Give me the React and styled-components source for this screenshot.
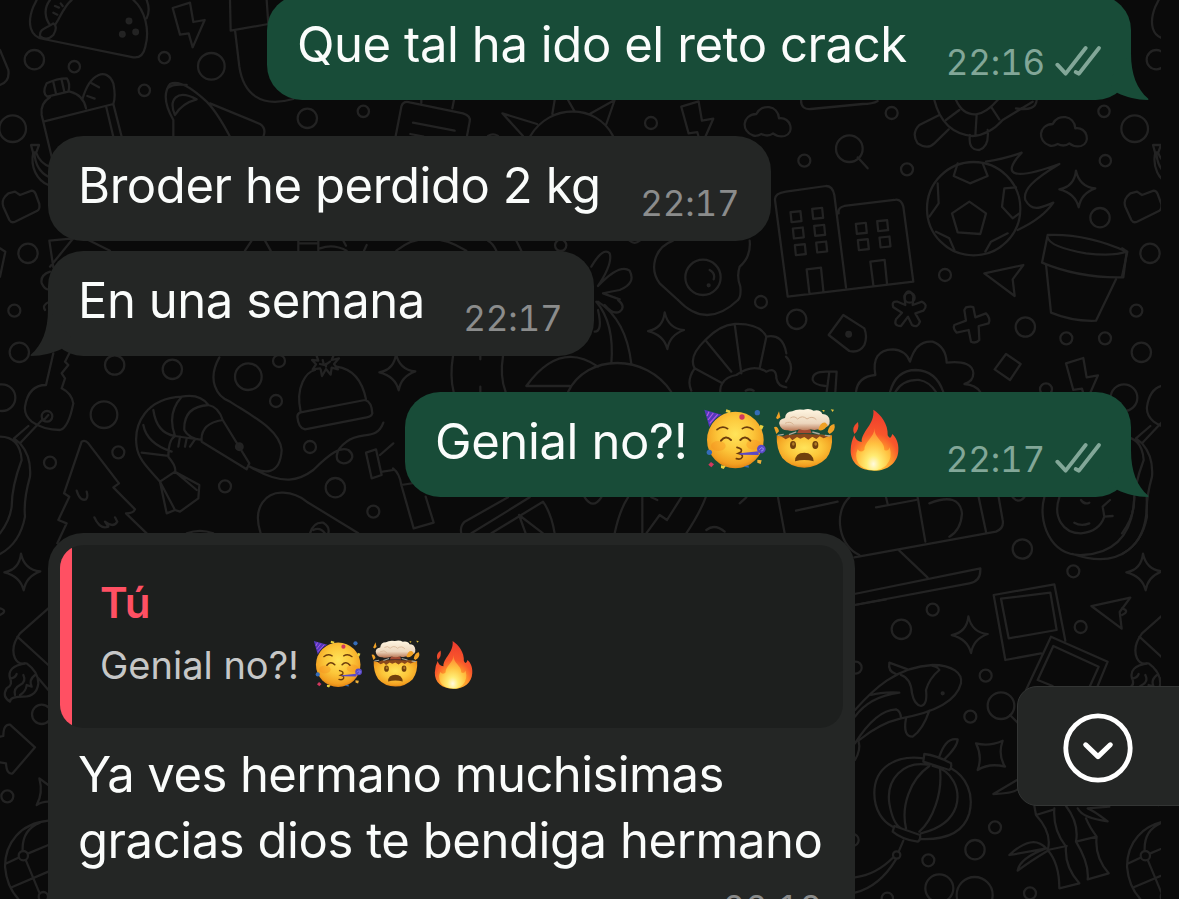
import React from "react";
import styled, { createGlobalStyle } from "styled-components";

const GlobalStyle = createGlobalStyle`
  * {
    box-sizing: border-box;
  }

  body {
    margin: 0;
    background: #0a0a0a;
    overflow: hidden;
  }
`;

const colors = {
  sent: "#184c38",
  received: "#242625",
  quote: "#1d1f1e",
  accent: "#ff5063",
  sentMeta: "#82a798",
  receivedMeta: "#8b8c8c",
};

/* ---------- wallpaper ---------- */

const Bolt = () => (
  <path d="M518 24L570 8L580 66L614 60L578 142L566 100L540 104Z" />
);

const Sparkle = () => (
  <path d="M870 512Q880 560 928 565Q885 580 878 622Q868 580 820 568Q865 560 870 512Z" />
);

const Cloud = () => (
  <path d="M790 436C755 425 755 375 800 372C815 340 865 345 868 385C905 380 915 430 885 438Q865 442 850 430Q835 442 815 432Q800 440 790 436Z" />
);

const Plane = () => <path d="M595 820L712 795L680 838L686 888Z" />;

const Bubbles = ({ items }) =>
  items.map(([x, y, r]) => <circle key={`${x}-${y}`} cx={x} cy={y} r={r} />);

// Doodles are drawn at three times their size, one block per area
const Block = ({ x, y, children }) => (
  <g transform={`translate(${x} ${y}) scale(0.33333)`}>{children}</g>
);

const windows = [
  [30, 650],
  [95, 640],
  [37, 699],
  [101, 691],
  [43, 749],
  [107, 741],
  [226, 685],
  [290, 677],
  [232, 734],
  [297, 726],
];

function Wallpaper() {
  return (
    <WallpaperSvg width="1161" height="899" viewBox="0 0 1161 899">
      <g
        fill="none"
        stroke="#232323"
        strokeWidth="6.8"
        strokeLinecap="round"
        strokeLinejoin="round"
      >
        <g id="tile-left">
          <Block x={0} y={0}>
            {/* taco */}
            <path d="M110 0L100 20C80 70 90 110 130 117L400 172Q428 176 436 140C450 90 435 30 400 0M120 108C118 85 140 85 160 70Q175 80 160 105Q140 125 120 108M165 75C180 55 190 20 215 0M150 75C135 55 130 25 150 0M440 0Q452 30 440 55M165 18l12 5M160 38l12 6M182 10l6 8" />
            <g fill="#232323">
              <Bubbles items={[[387, 63, 7], [367, 103, 7], [407, 96, 7]]} />
            </g>
            <Bolt />
            <path d="M0 255Q30 245 25 210L0 150" />
            <path d="M690 0L692 92L705 90L718 200C730 280 780 325 880 297M692 92L805 72L800 0" />
            {/* bottle */}
            <path d="M140 250Q170 235 200 235Q212 250 205 275L142 290Q125 280 140 250ZM160 246l8 35M185 240l8 35M150 292Q120 310 125 345L155 470M210 275Q250 285 258 325M130 365L340 312L365 410M318 318L340 410M248 295C270 220 320 200 340 250Q348 290 340 312M275 250l22 12M262 288l22 8" />
            <path d="M520 410V360Q480 290 510 252Q545 235 620 305Q650 335 690 410M525 345C505 300 530 265 590 298Q545 310 525 345M502 265Q520 250 560 255M630 310L780 372Q800 385 790 410" />
            {/* banana */}
            <path d="M93 435h24l-8 22h-10zM100 457C90 500 110 540 145 555M108 457Q120 490 150 500M103 457Q106 510 145 530" />
            <path d="M15 590L25 580L45 575L60 585L95 572Q103 572 107 582L118 612Q120 628 112 632L45 665Q34 670 28 660L10 620Q4 602 15 590Z" />
            <path d="M0 745L16 755L0 830M148 722L220 715L150 800M148 722l12 80M265 720L330 752M150 815Q120 825 125 850Q135 870 145 868" />
            <path d="M735 752L755 722M795 722L812 752M895 722V752M955 722V752M895 730H955M960 745Q1000 730 1040 752M1030 722l8 15M1100 735l-8 17" />
            <Bubbles
              items={[
                [103, 179, 29],
                [223, 200, 17],
                [493, 173, 17],
                [634, 199, 40],
                [433, 271, 17],
                [38, 386, 40],
                [922, 355, 29],
                [1090, 334, 17],
                [84, 760, 29],
              ]}
            />
          </Block>
          <Block x={0} y={300}>
            {/* key and its tag */}
            <path d="M160 160L138 255Q85 255 75 320Q72 345 95 365Q130 390 180 390Q205 385 220 310Q215 280 185 265L195 235L185 220L205 195L195 185L208 160M148 5Q125 15 135 30M85 378L42 415L60 430L128 358M130 362L145 345M0 410Q60 410 65 480Q35 560 35 620Q30 660 0 700M60 430Q95 470 90 530Q70 600 75 650Q60 730 0 762" />
            {/* tree */}
            <path d="M245 425Q255 418 265 430L357 550L340 562L405 628Q400 640 378 640L440 700M245 425L192 580L208 590L175 660L200 670L172 730M230 572Q240 605 258 598Q265 592 260 575M283 652Q300 690 325 680L315 665Q340 685 352 665L345 652" />
            {/* shrimp */}
            <path d="M545 290C440 295 400 370 410 440C415 480 450 510 480 545L500 640L525 630L540 635L595 595L598 555L525 515M480 545L525 515Q530 500 505 470Q505 420 525 408M425 458L505 468M430 375Q440 430 515 455M460 330Q470 400 525 408M545 290Q500 340 525 408L605 420M545 290Q600 280 625 315Q550 320 553 390Q565 415 605 420M625 315Q655 320 668 360Q600 370 605 425L740 508L748 490L668 360M540 410l-5 30M560 415l-5 25M585 418l-15 22M480 545L525 630M525 515L590 570" />
            <circle cx="718" cy="440" r="10" fill="#232323" />
            <path d="M658 172C620 240 650 290 690 305C760 350 840 390 845 450C840 530 790 520 750 500C850 560 900 540 940 510C990 460 1020 440 1045 450C1070 470 1050 490 1030 490C1000 485 1005 450 1040 425C1080 390 1130 425 1150 368" />
            {/* beanie */}
            <path d="M902 335C885 260 920 215 945 210M1010 200Q1080 210 1098 298M902 337L1095 300Q1115 305 1117 340Q1115 350 1100 352L915 388Q895 385 892 350Q892 340 902 337" />
            <path d="M960 205L938 208L948 193L936 180L955 182L950 168M1000 168L995 180L1017 175L1002 192L1014 208L995 203L992 224L978 207L966 228L962 208M960 192L972 195L968 180M980 192L990 185M978 200V192" />
            <path d="M1098 458L1128 448L1145 525L1115 535ZM1140 465L1180 430M1148 515L1180 510" />
            <path d="M782 700C755 620 800 575 850 578Q890 580 920 605L1075 700M930 700Q940 665 970 668Q990 680 985 700M940 690Q960 680 975 700M560 700Q600 685 640 700" />
            <Bubbles
              items={[
                [43, 32, 18],
                [58, 157, 29],
                [344, 195, 29],
                [517, 208, 29],
                [745, 230, 40],
                [837, 183, 18],
                [828, 303, 18],
                [6, 293, 40],
                [141, 349, 16],
                [312, 344, 40],
                [355, 457, 18],
                [150, 488, 18],
                [675, 559, 18],
                [930, 441, 18],
                [1006, 563, 29],
                [1120, 635, 18],
              ]}
            />
          </Block>
          <Block x={0} y={600}>
            <path d="M0 25Q25 32 0 45M145 25L60 100Q30 140 45 175Q55 195 75 190M52 110L145 195M115 235L145 270" />
            {/* flame */}
            <path d="M80 190Q115 215 115 250Q110 290 70 290Q30 290 30 305Q5 290 20 265Q40 255 30 235Q20 200 75 190M30 235Q45 235 50 222M70 225Q80 245 60 255Q40 265 45 285M105 225Q85 240 95 260L80 255Q78 275 60 285" />
            <path d="M0 410L10 408Q10 372 30 374L105 442L38 520Q20 525 18 490L0 487" />
            <path d="M145 605Q125 605 110 615Q130 580 118 535L145 555" />
            {/* globe */}
            <path d="M145 662C60 670 15 730 15 800Q20 860 55 897M120 668Q65 690 68 752M20 790L55 773M85 760L145 735M35 862L145 815M78 782L118 878" />
            <Bubbles
              items={[
                [125, 343, 29],
                [22, 589, 18],
                [70, 767, 14],
                [130, 890, 14],
              ]}
            />
          </Block>
          <g transform="translate(-1055 383)">
            <Block x={786} y={0}>
              <Sparkle />
            </Block>
          </g>
        </g>
        <use href="#tile-left" x="1122" />

        <Block x={508.6} y={98.7}>
          <Bolt />
        </Block>
        <Block x={893.3} y={355.3}>
          <Bolt />
        </Block>
        <Block x={106} y={183}>
          <Sparkle />
        </Block>
        <Block x={374.7} y={141.7}>
          <Sparkle />
        </Block>
        <Block x={678.4} y={445.7}>
          <Sparkle />
        </Block>
        <Block x={489.7} y={-10}>
          <Cloud />
        </Block>
        <Block x={893} y={332.7}>
          <Plane />
        </Block>

        <Block x={393} y={0}>
          <path d="M8 408L25 320Q30 302 50 307L210 340Q235 348 230 365L222 408M60 368L185 392M52 402l40 8M85 300v8M183 300l-5 25" />
          {/* sun */}
          <path d="M412 408C470 310 610 310 660 408M432 372L328 340L390 408M478 342L485 300M545 335L525 300M590 342L665 300L640 372" />
          {/* fried egg */}
          <path d="M1070 722Q1075 770 1040 800Q1030 830 1042 860Q1045 890 1035 900M840 722C780 745 770 810 800 850L855 900M950 810Q968 820 962 838" />
          <circle cx="947" cy="856" r="3" />
          <path d="M595 800Q630 740 650 760Q660 790 615 858Q680 790 710 812Q730 850 680 870Q650 875 630 880L680 898" />
          <path d="M10 752Q100 680 220 752M285 722Q300 730 310 752M370 722L385 752M285 408Q300 398 315 408M710 722Q725 735 740 722" />
          <Bubbles items={[[774, 369, 18], [503, 736, 17], [930, 832, 53]]} />
        </Block>

        <Block x={786} y={0}>
          {/* buildings */}
          <path d="M5 890L-33 600Q-35 580 0 575L120 558Q140 558 145 585L180 862M5 890L382 845L352 620Q345 595 325 600L175 618Q155 622 158 640M70 878L62 808L105 803L112 872M262 855L253 785L296 780L303 850" />
          {windows.map(([x, y]) => (
            <rect
              key={`${x}-${y}`}
              x={x - 15}
              y={y - 15}
              width="30"
              height="30"
              transform={`rotate(-6 ${x} ${y})`}
            />
          ))}
          <path d="M215 472L245 505M45 300Q45 330 75 327L230 312Q260 312 275 303" />
          {/* turtle */}
          <path d="M445 300Q470 400 560 408Q610 405 650 360L740 305M510 300Q530 345 570 343Q600 340 635 300M480 360L520 330M568 408L572 343M640 358L615 320M460 345L400 375Q375 400 395 430Q425 450 445 430L488 388M552 405Q545 450 580 450Q610 440 605 390M690 325Q750 335 752 300" />
          {/* football */}
          <path d="M550 605L600 640L583 702L515 697L498 640ZM515 490L503 528L552 550L605 528L590 490M690 562L655 565L648 620L680 655L700 640M455 550L458 610L430 650M450 695L490 715L505 750M665 700L615 725L598 755M600 485Q660 475 707 458C640 530 690 540 820 492C740 540 710 570 718 600C740 640 770 620 802 608Q770 655 695 690" />
          <Cloud />
          <Sparkle />
          <Plane />
          {/* flower pot */}
          <path d="M785 705Q900 700 1022 755L1012 832Q880 835 768 788ZM785 712Q790 740 900 760Q980 770 1022 755M780 793L795 938Q860 965 930 962L990 838" />
          <Bubbles
            items={[
              [190, 446, 40],
              [563, 626, 140],
              [55, 482, 18],
              [363, 508, 18],
              [317, 339, 18],
              [954, 334, 17],
              [958, 482, 17],
              [942, 653, 29],
              [477, 825, 18],
              [371, 893, 15],
            ]}
          />
        </Block>

        <Block x={393} y={300}>
          <path d="M180 168Q170 230 182 276M330 168Q320 230 338 276M262 168v10M262 260v16" />
          <path d="M610 5Q665 70 655 190M615 5Q700 60 715 192M675 0Q700 20 680 35Q660 45 635 15M605 95Q630 95 615 30M525 276C580 160 760 160 835 276M400 258H530M400 258Q500 120 615 200" />
          {/* croissant */}
          <path d="M855 0Q940 90 1035 0M905 205Q885 170 937 120Q980 75 1025 72Q1100 70 1120 110Q1170 100 1180 160M937 120L1015 215M1025 72L1045 220M1120 110L1100 205M905 205Q880 240 895 272M905 205L988 250Q1000 230 1030 225Q1080 190 1120 215Q1150 200 1150 235Q1155 260 1180 262M988 250Q980 262 982 276M1058 272Q1070 265 1082 272" />
          <path d="M0 505Q20 520 25 555L62 685L122 668L98 590M25 555L90 545M205 700Q200 680 215 665L345 592M235 700L410 592M295 700L450 605Q475 640 485 700M378 645L398 700M378 645L450 700M575 592Q600 630 625 592M665 700Q680 630 705 592M748 592V700M760 700L800 645L822 660L865 592M938 592Q920 640 880 700M940 690Q965 670 995 695M1040 610l20 -18M1155 592L1175 700M775 592l18 8" />
          <circle cx="1104" cy="6" r="18" />
        </Block>

        <Block x={786} y={300}>
          <path d="M172 45L235 85Q245 110 235 135Q220 160 190 153L128 105Z" />
          <circle cx="188" cy="103" r="7" fill="#232323" />
          <path d="M355 -12Q368 -40 382 -12L380 15L408 5Q428 15 412 32L388 40L402 65Q395 85 378 75L366 50L345 78Q322 78 330 58L348 38L322 22Q315 2 335 5L358 15Z" />
          <path d="M540 22Q555 18 562 22L568 52L600 40Q615 55 608 70L578 78L580 120Q570 132 555 125L548 90L512 98Q500 85 505 75L540 62L535 30Z" />
          <path d="M660 162L704 192L672 240L626 208Z" />
          <path d="M210 276Q215 230 268 225Q255 150 320 148Q360 150 372 185Q390 120 440 125Q480 140 482 188Q560 180 562 220Q562 245 535 252Q570 255 583 276M312 276Q330 210 390 210Q450 212 472 276M328 276Q350 238 400 240Q430 245 450 276" />
          <path d="M120 215H152L148 276M120 215Q78 215 80 240Q85 255 118 258M130 215L122 276M0 170Q30 200 0 245" />
          <path d="M30 632L155 605M190 592C140 640 160 740 220 765M205 772L630 695Q655 685 650 660L638 592M395 592L418 725M430 610Q520 575 528 640Q525 690 490 710M270 622L390 600M300 592l5 20M578 592L600 695M340 752L425 833M205 882L583 805Q585 845 550 850L205 915" />
          {/* smiling coin */}
          <path d="M775 592C755 660 790 770 890 765C990 760 1040 700 1045 592M860 762C1000 810 1090 740 1082 592M820 592C800 650 830 700 885 700Q940 695 955 650L980 648M955 650L950 620L972 600M865 668Q885 680 910 670M885 600Q895 615 910 608M680 592Q698 612 715 592" />
          <Bubbles
            items={[
              [32, 58, 29],
              [718, 81, 29],
              [841, 115, 18],
              [957, 115, 18],
              [709, 747, 29],
              [862, 814, 18],
              [780, 268, 18],
            ]}
          />
        </Block>

        <Block x={786} y={600}>
          {/* photos */}
          <path d="M838 122L805 -47L623 -15L658 180L765 160M668 115L645 -4L793 -22L812 90ZM720 270L795 110L965 185L935 258M800 258L755 240L802 138L938 200L912 258" />
          {/* koi */}
          <path d="M207 330C260 270 330 200 440 195C500 195 530 220 525 250C510 310 430 340 345 355M365 208L310 188Q305 215 330 222M345 225Q375 235 378 280Q385 315 405 318Q425 315 420 270Q430 235 460 210Q455 200 440 198M207 350Q250 290 340 278Q290 275 255 285M207 430Q270 330 330 328Q345 335 345 355Q280 370 220 420M360 355Q350 410 380 410Q410 390 430 332M207 480Q225 450 218 425" />
          <circle cx="470" cy="280" r="3" />
          {/* lantern */}
          <path d="M412 475C330 465 265 500 265 580C265 630 290 665 320 680M495 505C540 530 565 580 550 640C535 690 490 720 405 717M430 495C350 480 300 540 310 610Q320 670 345 685M440 498C500 510 525 570 510 620Q490 680 405 700M430 498C370 540 345 620 360 685M462 508C470 580 440 660 400 695M415 462Q450 465 495 490Q498 505 490 510L412 485ZM460 470Q480 410 515 418Q515 440 475 478M325 678L402 705Q405 720 395 725Q350 720 320 695ZM352 722L338 755M322 772Q270 825 207 832M330 778Q280 860 207 878" />
          <path d="M570 430Q610 440 650 422Q635 465 657 500Q610 488 575 510Q590 470 570 430ZM672 345L695 368" />
          {/* bamboo */}
          <path d="M745 618L750 645Q800 700 785 750Q820 790 820 865L880 850Q835 800 840 740Q800 690 805 625M750 645L805 628M785 750L842 738M840 618Q880 670 870 725Q910 790 905 838L968 820Q925 770 932 710Q910 680 900 655M870 725L932 710M693 540L622 582Q680 580 695 568M780 745Q740 700 670 765Q730 755 780 745Q700 775 695 812Q730 785 785 752M875 625Q890 655 965 664Q920 630 905 625L970 620" />
          <path d="M207 15L300 -2" />
          <Bubbles
            items={[
              [440, 29, 18],
              [346, 88, 29],
              [599, 227, 18],
              [553, 350, 18],
              [645, 317, 40],
              [332, 765, 11],
              [627, 682, 18],
              [567, 749, 29],
              [427, 781, 18],
              [460, 865, 42],
              [566, 885, 54],
              [732, 880, 18],
              [304, 895, 17],
              [884, 81, 18],
              [209, 203, 18],
              [200, 720, 18],
            ]}
          />
        </Block>
      </g>
    </WallpaperSvg>
  );
}

/* ---------- emoji ---------- */

const EmojiDefs = () => (
  <HiddenSvg width="0" height="0">
    <defs>
      <radialGradient id="face" cx="0.5" cy="0.4" r="0.62">
        <stop offset="0" stopColor="#ffe45a" />
        <stop offset="0.5" stopColor="#fcc63a" />
        <stop offset="0.85" stopColor="#f3a021" />
        <stop offset="1" stopColor="#dd7c10" />
      </radialGradient>
      <linearGradient id="cap" x1="0" y1="0" x2="0" y2="1">
        <stop offset="0" stopColor="#fff6e2" />
        <stop offset="0.65" stopColor="#ecd6bd" />
        <stop offset="1" stopColor="#b97552" />
      </linearGradient>
      <radialGradient id="flame" cx="0.5" cy="0.95" r="0.9">
        <stop offset="0" stopColor="#ffd23c" />
        <stop offset="0.4" stopColor="#ff9a2b" />
        <stop offset="0.62" stopColor="#f9572b" />
        <stop offset="1" stopColor="#ee3d2e" />
      </radialGradient>
      <radialGradient id="core" cx="0.5" cy="0.85" r="0.8">
        <stop offset="0" stopColor="#fffff0" />
        <stop offset="0.25" stopColor="#fff27a" />
        <stop offset="0.6" stopColor="#ffc743" />
        <stop offset="1" stopColor="#ff8a34" />
      </radialGradient>
    </defs>
  </HiddenSvg>
);

const PartyFace = () => (
  <Emoji viewBox="35 40 210 190">
    <circle cx="135" cy="136" r="85" fill="url(#face)" />
    <ellipse cx="84" cy="154" rx="22" ry="15" fill="#f58a1c" opacity="0.35" />
    <ellipse cx="190" cy="150" rx="22" ry="15" fill="#f58a1c" opacity="0.35" />
    <path d="M42 45L94 60Q72 70 57 97Z" fill="#5338bd" />
    <path
      d="M56 51L50 64M69 55L53 76M82 59L58 86"
      stroke="#b45ce0"
      strokeWidth="3.5"
    />
    <g fill="none" stroke="#6d3d0c" strokeWidth="5" strokeLinecap="round">
      <path d="M80 105Q95 92 112 102M156 102Q172 92 188 105" />
      <path d="M92 138Q106 120 122 136M150 136Q164 120 180 138" strokeWidth="6" />
      <path d="M140 158Q158 162 152 172L144 176Q158 178 156 187Q152 196 138 192" />
    </g>
    <path d="M148 176L205 170V181L148 180Z" fill="#5a49c6" />
    <circle cx="213" cy="163" r="13" fill="#5a49c6" />
    <path
      d="M207 165Q212 155 219 161Q220 171 212 169"
      fill="none"
      stroke="#948af0"
      strokeWidth="3"
    />
    <g fill="#e8cf3f">
      <path d="M108 44l13 4l-3 8l-12-4zM210 90l10 4l-5 11l-8-5zM92 212l14 2l-6 9l-8-3z" />
    </g>
    <path d="M201 195l13 2l-3 11l-10-4z" fill="#eeb03a" />
    <g fill="#356cb8">
      <circle cx="201" cy="54" r="8" />
      <circle cx="57" cy="173" r="8" />
      <path d="M160 216l14-5l2 8z" />
    </g>
    <g fill="#d2385e">
      <circle cx="155" cy="67" r="8" />
      <path d="M62 202l9 7l-8 9l-9-8z" />
    </g>
  </Emoji>
);

const MindBlown = () => (
  <Emoji viewBox="245 40 210 190">
    <path
      d="M259 122L278 126L294 121L314 126L340 121L366 126L390 120L425 122Q428 165 408 191Q380 219 342 219Q302 219 276 190Q258 165 259 122Z"
      fill="url(#face)"
    />
    <path
      d="M274 126L290 120L342 118L396 120L414 125L400 131L388 125L378 133L366 126L354 135L342 127L330 132L320 127L306 137L298 128L286 134Z"
      fill="#8a481c"
    />
    <path d="M326 104H360L364 116H320Z" fill="#a54b32" />
    <path
      d="M296 120L318 112M388 118L366 112M262 122L280 119M404 122L420 124"
      stroke="#a9a79b"
      strokeWidth="4"
      fill="none"
    />
    <path
      d="M268 92Q262 74 284 70Q286 50 306 50Q318 42 340 45Q358 40 370 48Q390 44 396 58Q416 58 418 78Q420 98 398 98Q380 110 360 104Q342 110 328 104Q306 112 292 107Q274 108 268 92Z"
      fill="url(#cap)"
    />
    <path
      d="M300 70Q312 62 322 73Q336 60 350 73Q366 62 378 75M284 86Q300 78 310 90"
      fill="none"
      stroke="#d8b493"
      strokeWidth="3"
    />
    <path
      d="M257 70L266 50L270 68L262 74ZM251 98Q262 92 266 110L258 118ZM384 106Q390 80 406 84L412 92Q400 112 384 106ZM412 112Q416 90 432 88Q438 106 418 118Z"
      fill="#f0a126"
    />
    <path d="M395 46l8 0l-2 7zM421 44l10 1l-4 7z" fill="#e8c43c" />
    <g fill="#70400d">
      <ellipse cx="308" cy="151" rx="9" ry="12" />
      <ellipse cx="375" cy="151" rx="9" ry="12" />
      <path d="M314 200Q314 174 342 174Q368 174 370 200Q342 192 314 200Z" />
    </g>
    <ellipse cx="309" cy="148" rx="4" ry="5" fill="#b17b25" />
    <ellipse cx="376" cy="148" rx="4" ry="5" fill="#b17b25" />
  </Emoji>
);

const Fire = () => (
  <Emoji viewBox="453 40 210 190">
    <path
      d="M547 45C570 60 592 88 590 122Q598 138 604 118C614 126 624 145 622 168C620 205 590 228 550 228C506 228 478 204 479 166Q480 140 490 122Q494 140 512 142C510 110 552 90 547 45Z"
      fill="url(#flame)"
    />
    <path d="M501 82Q506 105 490 118Q480 98 501 82Z" fill="#ee4a2c" />
    <path
      d="M551 100C548 130 582 140 580 166Q592 172 596 158Q606 190 586 212Q570 227 549 227Q515 226 502 206Q490 184 500 164Q508 176 520 166C520 140 548 132 551 100Z"
      fill="url(#core)"
      opacity="0.9"
    />
  </Emoji>
);

/* ---------- messages ---------- */

const Ticks = () => (
  <svg width="47" height="32" viewBox="376 126 141 96">
    <g
      fill="none"
      stroke={colors.sentMeta}
      strokeWidth="11.5"
      strokeLinecap="round"
      strokeLinejoin="round"
    >
      <path d="M383 185L408 212L468 135" />
      <path d="M438 207L448 212L508 135" />
    </g>
  </svg>
);

const BubbleTail = ({ $sent }) => (
  <Tail $sent={$sent} width="49" height="47" viewBox="0 0 49 47">
    <path
      d="M31 0C31 22 37 36 48.3 45.8Q49 47 47.5 47C37 47 26 44 17.5 40L8 28Z"
      fill={$sent ? colors.sent : colors.received}
    />
  </Tail>
);

const Reactions = ({ $size, $gap, $indent }) => (
  <EmojiGroup $size={$size} $gap={$gap} $indent={$indent}>
    <PartyFace />
    <MindBlown />
    <Fire />
  </EmojiGroup>
);

function Message({ text, time, sent, tail, width, spacing, gap, emoji }) {
  return (
    <Bubble $sent={sent} $width={width} $gap={gap}>
      <Text $spacing={spacing}>{text}</Text>
      {emoji && <Reactions $size={70} $gap={0} $indent={14.5} />}
      <Meta $sent={sent}>
        <span>{time}</span>
        {sent && <Ticks />}
      </Meta>
      {tail && <BubbleTail $sent={sent} />}
    </Bubble>
  );
}

export default function App() {
  return (
    <>
      <GlobalStyle />
      <EmojiDefs />
      <Screen>
        <Wallpaper />
        <Chat>
          <Message
            text="Que tal ha ido el reto crack"
            time="22:16"
            width={864}
            spacing={-0.42}
            gap={-5}
            sent
            tail
          />
          <Message
            text="Broder he perdido 2 kg"
            time="22:17"
            width={723}
            spacing={-0.42}
            gap={36}
          />
          <Message
            text="En una semana"
            time="22:17"
            width={546}
            spacing={-0.45}
            gap={10}
            tail
          />
          <Message
            text="Genial no?!"
            time="22:17"
            width={726}
            spacing={-0.38}
            gap={36}
            sent
            tail
            emoji
          />
          <ReplyBubble>
            <Quote>
              <Author>Tú</Author>
              <QuotedRow>
                <QuotedText>Genial no?!</QuotedText>
                <Reactions $size={55} $gap={2.6} $indent={13.5} />
              </QuotedRow>
            </Quote>
            <Reply>
              <Line $spacing={-0.57}>Ya ves hermano muchisimas</Line>
              <Line $spacing={-0.44}>gracias dios te bendiga hermano</Line>
            </Reply>
            <ReplyTime>22:18</ReplyTime>
          </ReplyBubble>
        </Chat>
        <ScrollButton aria-label="Bajar">
          <svg width="72" height="72" viewBox="0 0 72 72" fill="none">
            <circle cx="36" cy="36" r="32.2" stroke="#fff" strokeWidth="4.8" />
            <path
              d="M23.7 32.8L36 44.6L48.3 32.8"
              stroke="#fff"
              strokeWidth="5"
              strokeLinecap="round"
              strokeLinejoin="round"
            />
          </svg>
        </ScrollButton>
      </Screen>
    </>
  );
}

const Screen = styled.main`
  position: relative;
  width: 1179px;
  height: 899px;
  overflow: hidden;
  background: #0a0a0a;
  color: #fafcfb;
  font-family: Inter, "Liberation Sans", sans-serif;
`;

const WallpaperSvg = styled.svg`
  position: absolute;
  top: 0;
  left: 0;
`;

const HiddenSvg = styled.svg`
  position: absolute;
`;

const Chat = styled.div`
  position: relative;
  display: flex;
  flex-direction: column;
  align-items: flex-start;
  height: 100%;
  padding: 0 48px;
`;

const Bubble = styled.div`
  position: relative;
  display: flex;
  flex-shrink: 0;
  align-items: flex-start;
  align-self: ${(props) => (props.$sent ? "flex-end" : "flex-start")};
  width: ${(props) => props.$width}px;
  height: 105px;
  margin-top: ${(props) => props.$gap}px;
  padding: 17px 30px 0;
  border-radius: 35px;
  background: ${(props) => (props.$sent ? colors.sent : colors.received)};
`;

const Tail = styled.svg`
  position: absolute;
  bottom: 0;
  ${(props) => (props.$sent ? "right: -18px;" : "left: -18px;")}
  ${(props) => !props.$sent && "transform: scaleX(-1);"}
`;

const Text = styled.span`
  font-size: 49px;
  line-height: 66px;
  white-space: nowrap;
  letter-spacing: ${(props) => props.$spacing}px;
`;

const Meta = styled.div`
  display: flex;
  gap: 10px;
  margin: 30px ${(props) => (props.$sent ? 0 : 1.5)}px 0 auto;
  color: ${(props) =>
    props.$sent ? colors.sentMeta : colors.receivedMeta};
  font-size: 35px;
  font-variant-numeric: tabular-nums;
  line-height: 40px;
  letter-spacing: -0.2px;

  svg {
    margin: 3px -1px 0 0;
  }
`;

const EmojiGroup = styled.span`
  display: flex;
  gap: ${(props) => props.$gap}px;
  margin-left: ${(props) => props.$indent}px;

  svg {
    width: ${(props) => props.$size}px;
    margin-top: -1px;
  }
`;

const Emoji = styled.svg`
  display: block;
  flex-shrink: 0;
`;

const ReplyBubble = styled.div`
  display: flex;
  flex-direction: column;
  flex-shrink: 0;
  width: 807px;
  height: 420px;
  margin-top: 36px;
  padding: 12px;
  border-radius: 35px;
  background: ${colors.received};
`;

const Quote = styled.blockquote`
  height: 183px;
  margin: 0;
  padding: 32px 40px 0;
  border-radius: 23px;
  background: linear-gradient(
    to right,
    ${colors.accent} 12px,
    ${colors.quote} 12px
  );
`;

const Author = styled.div`
  color: ${colors.accent};
  font-size: 42px;
  font-weight: 600;
  line-height: 52px;
`;

const QuotedRow = styled.div`
  display: flex;
  margin-top: 8px;
`;

const QuotedText = styled.span`
  color: #c6c7c7;
  font-size: 38px;
  line-height: 56px;
  white-space: nowrap;
`;

const Reply = styled.div`
  padding: 14px 18px 0;
`;

const Line = styled.div`
  font-size: 49px;
  line-height: 66px;
  white-space: nowrap;
  letter-spacing: ${(props) => props.$spacing}px;
`;

const ReplyTime = styled.time`
  align-self: flex-end;
  margin: 14px 21px 0 0;
  color: ${colors.receivedMeta};
  font-size: 35px;
  font-variant-numeric: tabular-nums;
  line-height: 40px;
  letter-spacing: -0.2px;
`;

const ScrollButton = styled.button`
  position: absolute;
  top: 686px;
  right: -1px;
  display: flex;
  align-items: center;
  width: 163px;
  height: 120px;
  padding: 3px 0 0 44px;
  border: 1px solid #333534;
  border-radius: 20px 0 0 20px;
  background: ${colors.received};
`;
